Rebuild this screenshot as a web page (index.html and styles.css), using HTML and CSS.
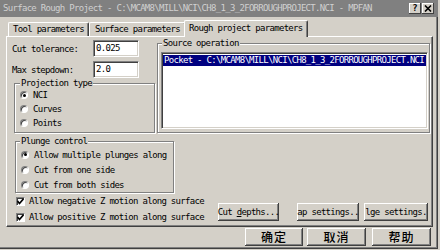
FILE: index.html
```html
<!DOCTYPE html>
<html lang="zh-CN">
<head>
    <meta charset="UTF-8">
    <meta name="viewport" content="width=device-width, initial-scale=1.0">
    <title>Surface Rough Project</title>
    <link rel="stylesheet" href="styles.css">
</head>
<body>
    <div class="window">
        <div class="titlebar">
            <span class="title">Surface Rough Project - C:\MCAM8\MILL\NCI\CH8_1_3_2FORROUGHPROJECT.NCI - MPFAN</span>
            <span class="cap-btn">?</span>
            <span class="cap-btn cap-close">
                <svg width="8" height="7" viewBox="0 0 8 7"><path d="M1 0.5 L7 6.5 M7 0.5 L1 6.5" stroke="#000" stroke-width="1.6"/></svg>
            </span>
        </div>

        <div class="tabs">
            <div class="tab">Tool parameters</div>
            <div class="tab tab-surface">Surface parameters</div>
            <div class="tab tab-active">Rough project parameters</div>
        </div>

        <div class="panel">
            <div class="top-section">
                <div class="left-col">
                    <div class="field-row">
                        <span class="field-label">Cut tolerance:</span>
                        <div class="edit">0.025</div>
                    </div>
                    <div class="field-row">
                        <span class="field-label">Max stepdown:</span>
                        <div class="edit">2.0</div>
                    </div>
                    <fieldset class="group projection">
                        <legend>Projection type</legend>
                        <div class="radio-row"><span class="radio checked"></span>NCI</div>
                        <div class="radio-row"><span class="radio"></span>Curves</div>
                        <div class="radio-row"><span class="radio"></span>Points</div>
                    </fieldset>
                </div>

                <fieldset class="group source">
                    <legend>Source operation</legend>
                    <div class="listbox">
                        <div class="list-item selected">Pocket - C:\MCAM8\MILL\NCI\CH8_1_3_2FORROUGHPROJECT.NCI</div>
                    </div>
                </fieldset>
            </div>

            <fieldset class="group plunge">
                <legend>Plunge control</legend>
                <div class="radio-row"><span class="radio checked"></span>Allow multiple plunges along</div>
                <div class="radio-row"><span class="radio"></span>Cut from one side</div>
                <div class="radio-row"><span class="radio"></span>Cut from both sides</div>
            </fieldset>

            <div class="bottom-row">
                <div class="checks">
                    <div class="check-row">
                        <span class="checkbox"><svg width="7" height="7" viewBox="0 0 7 7"><path d="M0.5 3 L2.5 5.5 L6.5 0.8" fill="none" stroke="#000" stroke-width="1.7"/></svg></span>
                        <span>Allow negative Z motion along surface</span>
                    </div>
                    <div class="check-row">
                        <span class="checkbox"><svg width="7" height="7" viewBox="0 0 7 7"><path d="M0.5 3 L2.5 5.5 L6.5 0.8" fill="none" stroke="#000" stroke-width="1.7"/></svg></span>
                        <span>Allow positive Z motion along surface</span>
                    </div>
                </div>
                <div class="panel-buttons">
                    <div class="btn btn-cut"><span>Cut <u>d</u>epths...</span></div>
                    <div class="btn btn-gap"><span>ap settings..</span></div>
                    <div class="btn btn-edge"><span>lge settings.</span></div>
                </div>
            </div>
        </div>

        <div class="dialog-buttons">
            <div class="btn dlg-btn dlg-ok">确定</div>
            <div class="btn dlg-btn dlg-cancel">取消</div>
            <div class="btn dlg-btn dlg-help">帮助</div>
        </div>
    </div>
</body>
</html>
```

FILE: styles.css
```css
* {
    box-sizing: border-box;
    margin: 0;
    padding: 0;
}

body {
    background-color: #d4d0c8;
    font-family: 'DejaVu Sans Mono', 'Liberation Mono', monospace;
    font-size: 9px;
    letter-spacing: -0.69px;
    color: #000;
}

.window {
    width: 438px;
    height: 249px;
    background-color: #d4d0c8;
    box-shadow: inset -1px -1px #404040, inset -2px -2px #808080;
    display: flex;
    flex-direction: column;
}

/* title bar (inactive) */
.titlebar {
    height: 17px;
    background-color: #808080;
    color: #d0d0d0;
    display: flex;
    align-items: center;
    padding: 0 4px 0 3px;
}

.title {
    flex: 1;
    white-space: nowrap;
    overflow: hidden;
    line-height: 17px;
}

.cap-btn {
    width: 12px;
    height: 11px;
    background-color: #d4d0c8;
    box-shadow: inset -1px -1px #404040, inset 1px 1px #fff;
    display: flex;
    align-items: center;
    justify-content: center;
    font-weight: bold;
    font-size: 9px;
    letter-spacing: 0;
    color: #000;
    line-height: 11px;
}

.cap-close {
    margin-left: 1px;
}

/* tabs */
.tabs {
    display: flex;
    align-items: flex-end;
    height: 19px;
    padding-left: 8px;
}

.tab {
    height: 14px;
    line-height: 13px;
    padding: 0 4px;
    border-top: 1px solid #fff;
    border-left: 1px solid #fff;
    border-right: 1px solid #404040;
    border-radius: 2px 2px 0 0;
    box-shadow: inset -1px 0 #808080;
    white-space: nowrap;
}

.tab-surface {
    padding: 0 5px;
}

.tab-active {
    height: 17px;
    line-height: 14px;
    margin: 0 0 -1px -2px;
    background-color: #d4d0c8;
    position: relative;
    z-index: 1;
}

/* tab page */
.panel {
    margin-left: 6px;
    width: 427px;
    height: 191px;
    border-top: 1px solid #fff;
    border-left: 1px solid #fff;
    border-right: 1px solid #404040;
    border-bottom: 1px solid #404040;
    box-shadow: inset -1px -1px #808080;
    padding: 2px 2px 0 5px;
    display: flex;
    flex-direction: column;
}

.top-section {
    display: flex;
    align-items: flex-start;
}

.left-col {
    width: 143px;
    margin-top: 1px;
}

.field-row {
    display: flex;
    align-items: center;
    height: 17px;
}

.field-row + .field-row {
    margin-top: 4px;
}

.field-label {
    width: 81px;
    white-space: nowrap;
}

.edit {
    width: 46px;
    height: 17px;
    background-color: #fff;
    border: 1px solid;
    border-color: #808080 #fff #fff #808080;
    box-shadow: inset 1px 1px #404040, inset -1px -1px #d4d0c8;
    padding-left: 2px;
    line-height: 15px;
}

/* group boxes */
.group {
    border: 1px solid #808080;
    box-shadow: inset 1px 1px #fff, 1px 1px #fff;
    padding: 0;
    min-width: 0;
}

.group legend {
    line-height: 9px;
    padding: 0 1px;
    margin-left: 4px;
    background-color: #d4d0c8;
    white-space: nowrap;
}

.projection {
    margin: 1px 0 0 2px;
    padding-bottom: 2px;
}

.projection legend {
    margin-left: 5px;
}

.projection .radio-row {
    height: 14px;
    padding-left: 5px;
}

.source {
    flex: 1;
    margin-left: 2px;
}

.listbox {
    margin: 4px 1px 3px 3px;
    height: 77px;
    background-color: #fff;
    border: 1px solid;
    border-color: #808080 #fff #fff #808080;
    box-shadow: inset 1px 1px #404040, inset -1px -1px #d4d0c8;
    padding: 2px 1px 0 1px;
}

.list-item {
    line-height: 11px;
    padding-left: 1px;
    white-space: nowrap;
    overflow: hidden;
}

.list-item.selected {
    background-color: #000080;
    color: #fff;
}

.plunge {
    width: 159px;
    margin: 4px 0 0 3px;
    padding-top: 1px;
}

.plunge .radio-row {
    height: 15px;
    padding-left: 5px;
}

.radio-row {
    display: flex;
    align-items: center;
    white-space: nowrap;
}

.radio {
    width: 8px;
    height: 8px;
    border-radius: 50%;
    background-color: #fff;
    border: 1px solid;
    border-color: #808080 #fff #fff #808080;
    box-shadow: inset 1px 1px #404040;
    margin-right: 5px;
    display: flex;
    align-items: center;
    justify-content: center;
}

.radio.checked::after {
    content: '';
    width: 3px;
    height: 3px;
    border-radius: 50%;
    background-color: #000;
}

/* check boxes and page buttons */
.bottom-row {
    display: flex;
    align-items: flex-start;
}

.checks {
    display: flex;
    flex-direction: column;
}

.check-row {
    display: flex;
    align-items: center;
    height: 16px;
    white-space: nowrap;
}

.checkbox {
    width: 9px;
    height: 9px;
    background-color: #fff;
    border: 1px solid;
    border-color: #808080 #fff #fff #808080;
    box-shadow: inset 1px 1px #404040;
    margin: 0 4px 0 4px;
    display: flex;
    align-items: center;
    justify-content: center;
}

.panel-buttons {
    display: flex;
    margin: 10px 2px 0 auto;
}

.btn {
    height: 18px;
    background-color: #d4d0c8;
    box-shadow: inset -1px -1px #404040, inset 1px 1px #fff, inset -2px -2px #808080;
    display: flex;
    align-items: center;
    justify-content: center;
    white-space: nowrap;
    line-height: 16px;
}

.btn-cut {
    width: 61px;
    margin-right: 18px;
}

.btn-gap {
    width: 62px;
    margin-right: 5px;
}

.btn-edge {
    width: 64px;
}

/* dialog buttons */
.dialog-buttons {
    display: flex;
    justify-content: flex-end;
    margin-top: 1px;
    padding-right: 7px;
}

.dlg-btn {
    width: 59px;
    font-family: 'Noto Sans CJK SC', sans-serif;
    font-size: 12px;
    font-weight: 500;
    letter-spacing: 1px;
}

.dlg-ok {
    width: 58px;
    margin-right: 4px;
}

.dlg-cancel {
    margin-right: 6px;
}
```
